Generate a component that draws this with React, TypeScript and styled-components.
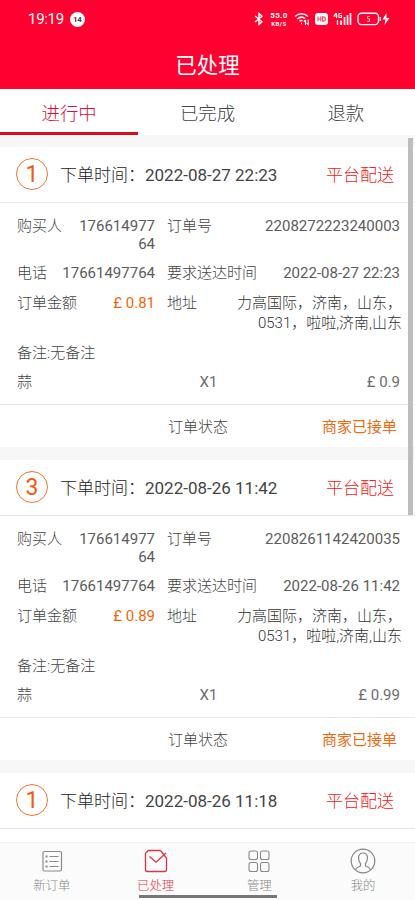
import React from 'react';
import styled, { createGlobalStyle } from 'styled-components';

const GlobalStyle = createGlobalStyle`
  * { box-sizing: border-box; }
  body {
    margin: 0;
    background: #fff;
    font-family: Roboto, "Noto Sans CJK SC", sans-serif;
    font-weight: 300;
    color: #333;
  }
`;

const Screen = styled.div`
  width: 415px;
  height: 900px;
  display: flex;
  flex-direction: column;
  overflow: hidden;
  position: relative;
  background: #fff;
`;

const StatusBar = styled.div`
  height: 38px;
  flex: none;
  display: flex;
  align-items: center;
  justify-content: space-between;
  padding: 0 25px 0 28px;
  background: #ff0030;
  color: #fff;
`;

const Clock = styled.div`
  display: flex;
  align-items: center;
  gap: 6px;
  font-size: 15px;
  font-weight: 400;
  line-height: 20px;
  letter-spacing: -0.3px;
`;

const Badge = styled.span`
  width: 15px;
  height: 15px;
  border-radius: 50%;
  background: #fff;
  color: #444;
  font-size: 8px;
  font-weight: 700;
  line-height: 15px;
  text-align: center;
`;

const Indicators = styled.div`
  display: flex;
  align-items: center;
  gap: 5px;
  svg { display: block; flex: none; }
`;

const NetSpeed = styled.div`
  width: 20px;
  font-size: 8px;
  font-weight: 700;
  text-align: center;
  span, small { display: block; }
  span { line-height: 9px; letter-spacing: 0.4px; }
  small { font-size: 6px; line-height: 7px; letter-spacing: 0.5px; }
`;

const TitleBar = styled.header`
  height: 51px;
  flex: none;
  display: flex;
  align-items: center;
  justify-content: center;
  padding-bottom: 1px;
  background: #ff0030;
  color: #fff;
  font-size: 21.5px;
  font-weight: 400;
`;

const Tabs = styled.nav`
  height: 46px;
  flex: none;
  display: grid;
  grid-template-columns: repeat(3, 1fr);
`;

const Tab = styled.div<{ $active?: boolean }>`
  display: flex;
  align-items: center;
  justify-content: center;
  padding-top: ${p => (p.$active ? 6 : 3)}px;
  border-bottom: ${p => (p.$active ? '3px solid #d90d22' : '0')};
  font-size: 18.4px;
  line-height: 24px;
  color: ${p => (p.$active ? '#d8123c' : '#444')};
`;

const List = styled.main`
  flex: 1;
  min-height: 0;
  overflow: hidden;
  display: flex;
  flex-direction: column;
  gap: 13px;
  padding-top: 12px;
  background: #f7f7f7;
`;

const Card = styled.section`
  flex: none;
  background: #fff;
`;

const CardHead = styled.div`
  height: 56px;
  display: flex;
  align-items: center;
  padding: 0 21px 2px 16px;
  border-bottom: 1px solid #e6e6e6;
  font-size: 17px;
`;

const Count = styled.span`
  width: 32px;
  height: 32px;
  margin-right: 12px;
  border: 1.4px solid #ee7733;
  border-radius: 50%;
  color: #f55a0c;
  font-size: 23px;
  font-weight: 400;
  line-height: 31px;
  text-align: center;
`;

const Placed = styled.span`
  flex: 1;
  color: #222;
  white-space: nowrap;
`;

const Time = styled.span`
  font-weight: 400;
  color: #444;
`;

const Delivery = styled.span`
  color: #ee2222;
`;

const Body = styled.div`
  display: flex;
  flex-direction: column;
  gap: 10px;
  height: 202px;
  padding: 14px 15px 0 17px;
  border-bottom: 1px solid #e6e6e6;
  font-size: 15px;
  line-height: 20px;
`;

const Row = styled.div<{ $line?: number }>`
  display: grid;
  grid-template-columns: 138px 1fr;
  column-gap: 12px;
  line-height: ${p => p.$line ?? 20}px;
`;

const Field = styled.div`
  display: flex;
  justify-content: space-between;
`;

const Label = styled.span`
  flex: none;
  color: #444;
`;

const Value = styled.span<{ $width?: number; $money?: boolean }>`
  width: ${p => (p.$width ? `${p.$width}px` : 'auto')};
  text-align: right;
  word-break: break-all;
  color: ${p => (p.$money ? '#f2660a' : '#5c5c5c')};
  font-weight: 400;
`;

const Address = styled(Value)`
  width: 166px;
  margin-right: -2px;
  white-space: pre-line;
  font-weight: 300;
  color: #333;
`;

const Item = styled.div`
  display: grid;
  grid-template-columns: 1fr 1fr 1fr;
  margin-top: -1px;
  color: #444;
  span:nth-child(2) { text-align: center; font-weight: 400; color: #6c6c6c; }
  span:nth-child(3) { text-align: right; font-weight: 400; color: #6c6c6c; }
`;

const StatusRow = styled.div`
  height: 42px;
  display: flex;
  align-items: center;
  justify-content: space-between;
  padding: 0 18px 1px 168px;
  font-size: 15px;
  color: #444;
`;

const State = styled.span`
  color: #ee6a10;
  font-weight: 400;
`;

const Scrollbar = styled.div`
  position: absolute;
  top: 138px;
  right: 2px;
  width: 5px;
  height: 377px;
  background: #bdbdbd;
`;

const BottomNav = styled.nav`
  height: 58px;
  flex: none;
  display: grid;
  grid-template-columns: repeat(4, 1fr);
  background: #fbfbfb;
  border-top: 1px solid #eeeeee;
`;

const NavItem = styled.div<{ $active?: boolean }>`
  display: flex;
  flex-direction: column;
  align-items: center;
  padding-top: 5px;
  font-size: 12.4px;
  line-height: 20px;
  color: ${p => (p.$active ? '#dd3344' : '#888')};
  svg { display: block; margin-bottom: 2px; }
`;

const HomeBar = styled.div`
  position: absolute;
  left: 139px;
  bottom: 2px;
  width: 138px;
  height: 3px;
  background: #777;
`;

const BluetoothIcon = () => (
  <svg width="10" height="14" viewBox="0 0 10 14" fill="none" stroke="#fff" strokeWidth="1.4">
    <path d="M1 4l7 5.800L5 12.500v-11L8 4.200 1 10" />
  </svg>
);

const WifiIcon = () => (
  <svg width="16" height="14" viewBox="0 0 16 14" fill="none" stroke="#fff" strokeWidth="1.5">
    <path d="M1 4.500Q7.500-.8 14 4.500M3.300 7Q7.500 3.500 11 6.500M5.500 9.300Q7 8 8.500 9M7 11.500h1" />
    <path d="M11.500 13V8M9.800 9.500l1.700-1.700M14.200 7.500v5l-1.400-1.400" strokeWidth="1.200" />
  </svg>
);

const HdIcon = () => (
  <svg width="13" height="12" viewBox="0 0 13 12">
    <rect width="13" height="12" rx="3" fill="#fff" />
    <path d="M3 3.500v5M5.800 3.500v5M3 6h2.800M7.500 3.800v4.400h1q2-.2 2-2.200t-2-2.200z" fill="none" stroke="#ff4b62" strokeWidth="1.200" />
  </svg>
);

const SignalIcon = () => (
  <svg width="19" height="14" viewBox="0 0 19 14" fill="none" stroke="#fff">
    <path d="M3 1L1 4h3.500M3.500 1v5M8.500 1.500H6v4h2.500v-2H7.300" strokeWidth="1.100" />
    <path d="M8 13V8.500M11.500 13V5M14.500 13V3M17.500 13V1" strokeWidth="1.700" />
    <path d="M4.500 13V8" strokeWidth="1.300" />
  </svg>
);

const BatteryIcon = () => (
  <svg width="33" height="14" viewBox="0 0 33 14">
    <rect x="1" y="1.200" width="20.500" height="11.400" rx="3.500" fill="none" stroke="#fff" strokeWidth="1.400" />
    <path d="M23.300 5v4" stroke="#fff" strokeWidth="1.300" />
    <path d="M12.800 4.500h-2.300v2.300h2v2.500h-2.300" fill="none" stroke="#ffb3bd" strokeWidth="1" />
    <path d="M29.500 1L25.500 7.500h3L27.500 13 32.500 6h-3z" fill="#fff" />
  </svg>
);

const OrdersIcon = () => (
  <svg width="26" height="26" viewBox="0 0 26 26" fill="none" stroke="#8a8a8a" strokeWidth="1.200">
    <rect x="4" y="3.500" width="18.500" height="19.500" rx="1.500" />
    <path d="M10.500 8.500h9M10.500 13.500h9M10.500 18.500h9" />
    <path d="M6.500 8.500h2M6.500 13.500h2M6.500 18.500h2" strokeWidth="1.800" />
  </svg>
);

const DoneIcon = () => (
  <svg width="26" height="26" viewBox="0 0 26 26" fill="none" stroke="#dd3344" strokeWidth="1.300">
    <path d="M17.500 2.500H5.200L2.500 5.200V21.500Q2.500 23.500 4.500 23.500H21.500Q23.500 23.500 23.500 21.500V10L17.500 2.500" />
    <path d="M6.500 8.500l6.500 5.700L23 5" />
  </svg>
);

const GridIcon = () => (
  <svg width="26" height="26" viewBox="0 0 26 26" fill="none" stroke="#8a8a8a" strokeWidth="1.100">
    <rect x="3" y="3" width="8.500" height="8.500" rx="2" />
    <rect x="14.500" y="3" width="8.500" height="8.500" rx="2" />
    <rect x="3" y="14.500" width="8.500" height="9" rx="2" />
    <rect x="14.500" y="14.500" width="8.500" height="9" rx="2" />
  </svg>
);

const UserIcon = () => (
  <svg width="26" height="26" viewBox="0 0 26 26" fill="none" stroke="#858585" strokeWidth="1.200">
    <circle cx="13" cy="13" r="11.800" />
    <path d="M5.800 21.800Q6 19.500 10.500 18V15.500Q8.500 13.500 8.500 9.500 9 5 13 5t4.500 4.500Q17.500 13.500 15.500 15.500V18Q20 19.500 20.200 21.800" />
  </svg>
);

interface Order {
  count: number;
  time: string;
  number: string;
  total: string;
  price: string;
}

const orders: Order[] = [
  { count: 1, time: '2022-08-27 22:23', number: '2208272223240003', total: '0.81', price: '0.9' },
  { count: 3, time: '2022-08-26 11:42', number: '2208261142420035', total: '0.89', price: '0.99' },
];

const OrderHead = ({ count, time }: { count: number; time: string }) => (
  <CardHead>
    <Count>{count}</Count>
    <Placed>下单时间：<Time>{time}</Time></Placed>
    <Delivery>平台配送</Delivery>
  </CardHead>
);

const OrderCard = ({ order }: { order: Order }) => (
  <Card>
    <OrderHead count={order.count} time={order.time} />
    <Body>
      <Row $line={18}>
        <Field><Label>购买人</Label><Value $width={80}>17661497764</Value></Field>
        <Field><Label>订单号</Label><Value>{order.number}</Value></Field>
      </Row>
      <Row>
        <Field><Label>电话</Label><Value>17661497764</Value></Field>
        <Field><Label>要求送达时间</Label><Value>{order.time}</Value></Field>
      </Row>
      <Row>
        <Field><Label>订单金额</Label><Value $money>£ {order.total}</Value></Field>
        <Field><Label>地址</Label><Address>{'力高国际，济南，山东，\n0531，啦啦,济南,山东'}</Address></Field>
      </Row>
      <Label>备注:无备注</Label>
      <Item><span>蒜</span><span>X1</span><span>£ {order.price}</span></Item>
    </Body>
    <StatusRow><span>订单状态</span><State>商家已接单</State></StatusRow>
  </Card>
);

const FollowingCard = styled(Card)`
  height: 80px;
`;

export default function App() {
  return (
    <>
      <GlobalStyle />
      <Screen>
        <StatusBar>
          <Clock>19:19<Badge>14</Badge></Clock>
          <Indicators>
            <BluetoothIcon />
            <NetSpeed><span>55.0</span><small>KB/S</small></NetSpeed>
            <WifiIcon />
            <HdIcon />
            <SignalIcon />
            <BatteryIcon />
          </Indicators>
        </StatusBar>
        <TitleBar>已处理</TitleBar>
        <Tabs>
          <Tab $active>进行中</Tab>
          <Tab>已完成</Tab>
          <Tab>退款</Tab>
        </Tabs>
        <List>
          {orders.map(o => <OrderCard key={o.number} order={o} />)}
          <FollowingCard><OrderHead count={1} time="2022-08-26 11:18" /></FollowingCard>
        </List>
        <BottomNav>
          <NavItem><OrdersIcon />新订单</NavItem>
          <NavItem $active><DoneIcon />已处理</NavItem>
          <NavItem><GridIcon />管理</NavItem>
          <NavItem><UserIcon />我的</NavItem>
        </BottomNav>
        <Scrollbar />
        <HomeBar />
      </Screen>
    </>
  );
}
